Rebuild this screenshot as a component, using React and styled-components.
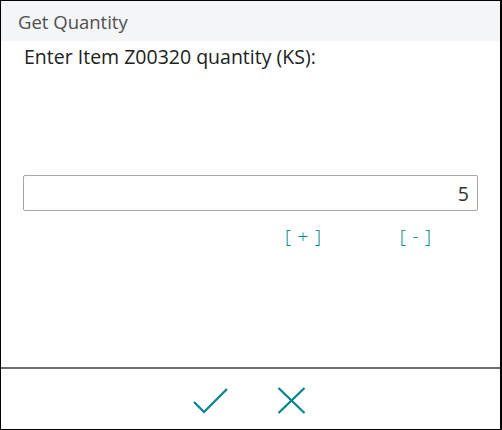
import styled, { createGlobalStyle } from 'styled-components';

const GlobalStyle = createGlobalStyle`
  html, body { margin: 0; padding: 0; background: #fff; }
  body { font-family: "Open Sans", "Noto Sans", sans-serif; }
  * { box-sizing: border-box; }
`;

const Dialog = styled.div`
  width: 502px;
  height: 430px;
  border: 1px solid #000;
  border-right-width: 2px;
  display: flex;
  flex-direction: column;
  background: #fff;
`;

const Header = styled.div`
  height: 40px;
  background: #f4f5f7;
  padding: 10px 0 0 17px;
  font-size: 18.5px;
  color: #505050;
  line-height: 22px;
`;

const Body = styled.div`
  flex: 1;
  padding: 3px 22px 0 22px;
  display: flex;
  flex-direction: column;
`;

const Prompt = styled.div`
  font-size: 19.5px;
  line-height: 26px;
  color: #212121;
  padding-left: 1px;
`;

const QtyInput = styled.input`
  margin-top: 105px;
  width: 100%;
  height: 36px;
  border: 1px solid #a6a6a6;
  border-radius: 2px;
  text-align: right;
  font-family: inherit;
  font-size: 19.5px;
  color: #333;
  padding: 0 8px;
  outline: none;
`;

const StepRow = styled.div`
  display: flex;
  padding-left: 262px;
  margin-top: 13px;
  gap: 78px;
`;

const StepButton = styled.button`
  background: none;
  border: none;
  padding: 0;
  font-family: inherit;
  font-size: 19px;
  font-weight: 300;
  line-height: 24px;
  letter-spacing: 0.8px;
  color: #00838a;
  cursor: pointer;
  white-space: pre;
`;

const Footer = styled.div`
  height: 62px;
  border-top: 2px solid #6e6e6e;
  display: flex;
  justify-content: center;
  align-items: center;
  gap: 48px;
  padding-right: 2px;
  padding-top: 2px;
`;

const IconButton = styled.button`
  background: none;
  border: none;
  padding: 0;
  display: flex;
  cursor: pointer;
`;

export default function App() {
  return (
    <>
      <GlobalStyle />
      <Dialog>
        <Header>Get Quantity</Header>
        <Body>
          <Prompt>Enter Item Z00320 quantity (KS):</Prompt>
          <QtyInput defaultValue="5" />
          <StepRow>
            <StepButton>[ + ]</StepButton>
            <StepButton>[ - ]</StepButton>
          </StepRow>
        </Body>
        <Footer>
          <IconButton aria-label="OK">
            <svg width="36" height="27" viewBox="0 0 36 27">
              <path d="M1 15 L11 25 L34 2" fill="none" stroke="#00838a" strokeWidth="2.2" />
            </svg>
          </IconButton>
          <IconButton aria-label="Cancel">
            <svg width="29" height="27" viewBox="0 0 29 27">
              <path d="M1.5 1 L27.5 26 M27.5 1 L1.5 26" fill="none" stroke="#00838a" strokeWidth="2.2" />
            </svg>
          </IconButton>
        </Footer>
      </Dialog>
    </>
  );
}
